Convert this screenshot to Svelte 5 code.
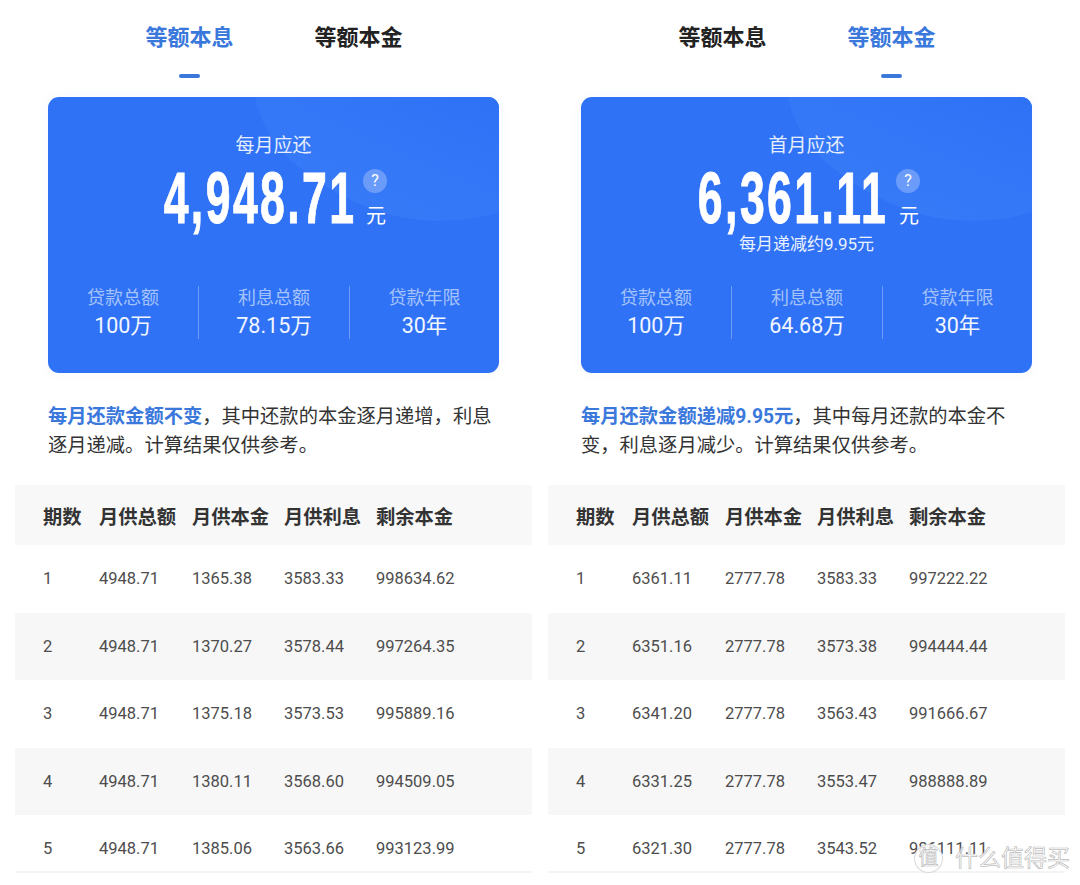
<script lang="ts">
	const panels = [
		{
			active: 0,
			label: '每月应还',
			amount: '4,948.71',
			sub: '',
			stats: [['贷款总额', '100万'], ['利息总额', '78.15万'], ['贷款年限', '30年']],
			lead: '每月还款金额不变',
			rest: '，其中还款的本金逐月递增，利息逐月递减。计算结果仅供参考。',
			rows: [
				['1', '4948.71', '1365.38', '3583.33', '998634.62'],
				['2', '4948.71', '1370.27', '3578.44', '997264.35'],
				['3', '4948.71', '1375.18', '3573.53', '995889.16'],
				['4', '4948.71', '1380.11', '3568.60', '994509.05'],
				['5', '4948.71', '1385.06', '3563.66', '993123.99']
			]
		},
		{
			active: 1,
			label: '首月应还',
			amount: '6,361.11',
			sub: '每月递减约9.95元',
			stats: [['贷款总额', '100万'], ['利息总额', '64.68万'], ['贷款年限', '30年']],
			lead: '每月还款金额递减9.95元',
			rest: '，其中每月还款的本金不变，利息逐月减少。计算结果仅供参考。',
			rows: [
				['1', '6361.11', '2777.78', '3583.33', '997222.22'],
				['2', '6351.16', '2777.78', '3573.38', '994444.44'],
				['3', '6341.20', '2777.78', '3563.43', '991666.67'],
				['4', '6331.25', '2777.78', '3553.47', '988888.89'],
				['5', '6321.30', '2777.78', '3543.52', '986111.11']
			]
		}
	];
	const tabs = ['等额本息', '等额本金'];
	const heads = ['期数', '月供总额', '月供本金', '月供利息', '剩余本金'];
</script>

<div class="page">
	{#each panels as p, n}
		<section class="panel">
			<div class="tabs">
				{#each tabs as t, i}
					<div class="tab" class:on={p.active === i}>{t}</div>
				{/each}
			</div>

			<div class="card">
				<svg class="wave" viewBox="0 0 451 276" aria-hidden="true">
					<defs>
						<linearGradient id="wave-{n}" x1="0.1" y1="0.9" x2="0.9" y2="0">
							<stop offset="0" stop-color="#387cf8" />
							<stop offset="1" stop-color="#3072f6" />
						</linearGradient>
					</defs>
					<path
						fill="url(#wave-{n})"
						d="M207 0C214 30 228 52 250 69C282 96 318 112 352 120C382 126 420 125 451 115V0Z"
					/>
				</svg>
				<div class="label">{p.label}</div>
				<div class="hero">
					<div class="amount"><span>{p.amount}</span></div>
					<div class="side">
						<span class="help">?</span>
						<span class="unit">元</span>
					</div>
				</div>
				<div class="sub">{p.sub}</div>
				<div class="stats">
					{#each p.stats as s}
						<div class="stat">
							<div class="stat-k">{s[0]}</div>
							<div class="stat-v">{s[1]}</div>
						</div>
					{/each}
				</div>
			</div>

			<p class="note"><b>{p.lead}</b>{p.rest}</p>

			<div class="table">
				<div class="row head">
					{#each heads as h}<span>{h}</span>{/each}
				</div>
				{#each p.rows as r, i}
					<div class="row" class:alt={i % 2 === 1}>
						{#each r as c}<span>{c}</span>{/each}
					</div>
				{/each}
			</div>
		</section>
	{/each}

	<div class="mark">
		<span class="mark-logo">值</span>
		<span>什么值得买</span>
	</div>
</div>

<style>
	:global(body) {
		margin: 0;
		background: #fff;
	}
	.page {
		position: relative;
		display: grid;
		grid-template-columns: 533px 547px;
		width: 1080px;
		height: 885px;
		overflow: hidden;
		font-family: Roboto, 'Noto Sans CJK SC', sans-serif;
		color: #222;
	}
	.panel {
		min-width: 0;
	}
	.tabs {
		display: flex;
		margin-left: 105px;
		height: 97px;
	}
	.tab {
		position: relative;
		width: 169px;
		padding-top: 22px;
		text-align: center;
		font-size: 22px;
		line-height: 32px;
		font-weight: 700;
		color: #222;
	}
	.tab.on {
		color: #3a78dc;
	}
	.tab.on::after {
		content: '';
		position: absolute;
		left: 74px;
		top: 74px;
		width: 21px;
		height: 4px;
		border-radius: 2px;
		background: #3a78dc;
	}
	.card {
		position: relative;
		display: flex;
		flex-direction: column;
		width: 451px;
		height: 276px;
		margin-left: 48px;
		border-radius: 11px;
		background: #3072f6;
		color: #fff;
		overflow: hidden;
		box-shadow: 0 0 14px rgba(48, 114, 246, 0.04);
	}
	.wave {
		position: absolute;
		inset: 0;
		width: 100%;
		height: 100%;
	}
	.label,
	.hero,
	.sub,
	.stats {
		position: relative;
	}
	.label {
		margin-top: 35px;
		text-align: center;
		font-size: 19px;
		line-height: 28px;
		color: #e6eefe;
	}
	.hero {
		display: flex;
		justify-content: center;
		height: 61px;
		margin-top: 6px;
	}
	.amount {
		width: 199px;
		display: flex;
		justify-content: center;
		font-family: 'Liberation Sans', sans-serif;
		font-size: 73px;
		line-height: 64px;
		font-weight: 700;
		letter-spacing: 4px;
		white-space: nowrap;
		-webkit-text-stroke: 1px #fff;
	}
	.amount span {
		display: inline-block;
		transform: translateX(1px) scaleX(0.61);
	}
	.side {
		display: flex;
		flex-direction: column;
		align-items: center;
		width: 24px;
		margin-left: 4px;
	}
	.help {
		width: 24px;
		height: 25px;
		margin-top: 3px;
		border-radius: 50%;
		background: #6b9bf9;
		text-align: center;
		font-size: 16px;
		line-height: 24px;
	}
	.unit {
		margin: 10px 0 0 2px;
		font-size: 20px;
		line-height: 26px;
		white-space: nowrap;
	}
	.sub {
		height: 24px;
		margin-top: 5px;
		text-align: center;
		font-size: 17px;
		line-height: 24px;
		color: #eaf1ff;
	}
	.stats {
		display: grid;
		grid-template-columns: 150px 151px 150px;
		margin-top: 30px;
	}
	.stat {
		height: 53px;
		text-align: center;
		border-left: 1px solid #6e9cf9;
		box-sizing: border-box;
	}
	.stat:first-child {
		border-left: 0;
	}
	.stat-k {
		font-size: 18px;
		line-height: 24px;
		color: #a5c3fb;
	}
	.stat-v {
		margin-top: 2px;
		font-size: 21.5px;
		line-height: 28px;
		color: #f2f6ff;
	}
	.note {
		width: 456px;
		margin: 29px 0 0 48px;
		height: 83px;
		font-size: 19.3px;
		line-height: 29px;
		color: #333;
	}
	.note b {
		color: #3a78dc;
	}
	.table {
		width: 517px;
		margin-left: 15px;
	}
	.row {
		position: relative;
		display: grid;
		grid-template-columns: 56px 93px 92px 92px 1fr;
		align-items: center;
		height: 67.5px;
		padding-left: 28px;
		font-size: 16.5px;
		color: #4d4d4d;
	}
	.row:last-child::after {
		content: '';
		position: absolute;
		left: 0;
		right: 0;
		top: 56px;
		height: 2px;
		background: #f4f4f4;
	}
	.row.alt {
		background: #f7f7f7;
	}
	.row.head {
		height: 60px;
		padding-top: 1px;
		box-sizing: border-box;
		background: #f8f8f8;
		font-size: 19.3px;
		font-weight: 700;
		color: #333;
	}
	.mark {
		position: absolute;
		right: 10px;
		bottom: 12px;
		display: flex;
		align-items: center;
		gap: 12px;
		font-size: 23px;
		line-height: 28px;
		color: rgba(255, 255, 255, 0.8);
		-webkit-text-stroke: 0.7px rgba(170, 170, 170, 0.8);
	}
	.mark-logo {
		width: 27px;
		height: 27px;
		border: 1px solid rgba(200, 200, 200, 0.7);
		border-radius: 50%;
		background: rgba(255, 255, 255, 0.85);
		text-align: center;
		font-size: 20px;
		line-height: 27px;
	}
</style>
